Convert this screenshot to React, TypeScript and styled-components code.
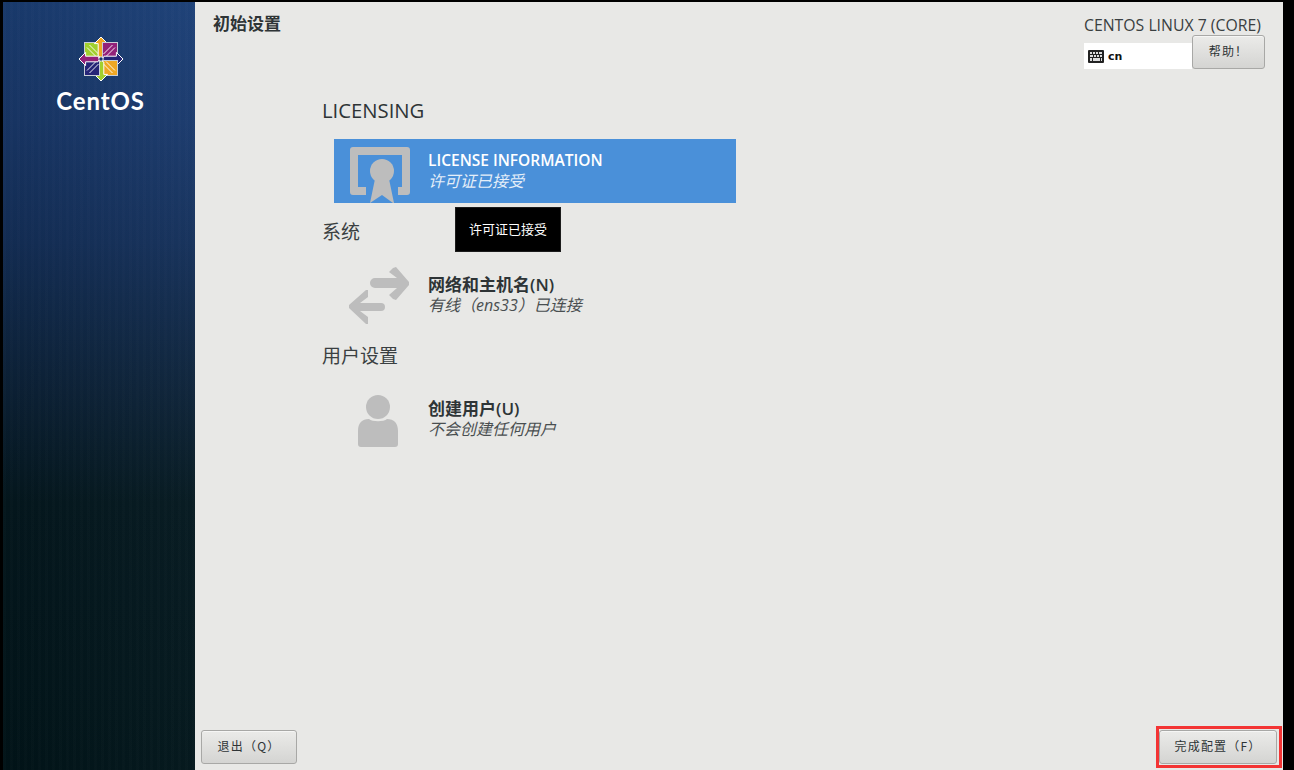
import * as React from "react"
import styled, { createGlobalStyle } from "styled-components"

const latin = `"Open Sans", "Noto Sans CJK SC", sans-serif`
const cjk = `"Noto Sans CJK SC", "Noto Sans", sans-serif`

const GlobalStyle = createGlobalStyle`
  html, body {
    margin: 0;
    padding: 0;
    background: #000;
    overflow: hidden;
  }
  * {
    box-sizing: border-box;
  }
`

const Screen = styled.div`
  display: grid;
  grid-template-columns: 192px 1088px;
  width: 1294px;
  height: 770px;
  padding: 2px 0 0 3px;
  background: #000;
  font-family: ${latin};
  color: #2e3436;
`

const Sidebar = styled.aside`
  display: flex;
  flex-direction: column;
  align-items: center;
  padding: 34px 0 0 3px;
  background:
    repeating-linear-gradient(90deg, rgba(255, 255, 255, 0.012) 0 3px, transparent 3px 7px),
    linear-gradient(90deg, rgba(0, 0, 0, 0.1), rgba(255, 255, 255, 0.02)),
    linear-gradient(180deg, #1b3f76 0, #19396c 120px, #14305a 240px, #0c2238 390px, #04181f 500px, #01151a 768px);
`

const LogoMark = styled.svg`
  display: block;
  width: 46px;
  height: 46px;
`

const LogoName = styled.div`
  margin-top: 6px;
  font-family: "Lato", sans-serif;
  font-size: 24px;
  line-height: 26px;
  font-weight: 700;
  letter-spacing: 0.9px;
  color: #fff;
`

const Main = styled.main`
  display: flex;
  flex-direction: column;
  background: #e8e8e6;
  min-height: 0;
`

const Header = styled.header`
  display: flex;
  justify-content: space-between;
  align-items: flex-start;
  padding: 9px 18px 0;
`

const PageTitle = styled.h1`
  margin: 0;
  font-family: ${cjk};
  font-size: 17px;
  line-height: 24px;
  font-weight: 700;
  color: #2e3436;
`

const ProductBlock = styled.div`
  width: 181px;
  padding-top: 4px;
`

const ProductName = styled.div`
  font-size: 15.8px;
  line-height: 20px;
  white-space: nowrap;
  color: #3a3f41;
`

const LayoutRow = styled.div`
  display: flex;
  align-items: flex-end;
`

const LayoutIndicator = styled.div`
  display: flex;
  align-items: center;
  gap: 4px;
  width: 108px;
  height: 26px;
  padding-left: 4px;
  background: #fff;
  font-family: "DejaVu Sans", sans-serif;
  font-size: 11px;
  font-weight: 700;
  color: #111;
`

const Button = styled.button<{ $width: number }>`
  width: ${({ $width }) => $width}px;
  height: 34px;
  padding: 0 0 3px;
  border: 1px solid #a8a8a6;
  border-radius: 3px;
  background: linear-gradient(180deg, #ebebe9, #d4d4d2);
  box-shadow: inset 0 1px 0 #f6f6f5;
  font-family: ${cjk};
  font-size: 12px;
  letter-spacing: 1.2px;
  color: #2e3436;
`

const Content = styled.div`
  display: flex;
  flex-direction: column;
  gap: 17px;
  margin-top: 27px;
  padding-left: 127px;
`

const Section = styled.section`
  display: flex;
  flex-direction: column;
`

const SectionTitle = styled.h2<{ $latin?: boolean }>`
  margin: 0 0 ${({ $latin }) => ($latin ? 17 : 19)}px;
  padding-top: ${({ $latin }) => ($latin ? 2 : 0)}px;
  font-family: ${latin};
  font-size: ${({ $latin }) => ($latin ? 20.3 : 19)}px;
  line-height: 24px;
  font-weight: 400;
  color: ${({ $latin }) => ($latin ? "#2e3436" : "#3a3f41")};
`

const Spoke = styled.div<{ $selected?: boolean }>`
  position: relative;
  display: flex;
  align-items: center;
  gap: 18px;
  width: 402px;
  height: 64px;
  margin-left: 12px;
  padding-left: 12px;
  background: ${({ $selected }) => ($selected ? "#4a90d9" : "transparent")};
  color: ${({ $selected }) => ($selected ? "#fff" : "#2e3436")};
`

const SpokeIcon = styled.svg`
  flex: none;
  display: block;
  width: 64px;
  height: 64px;
  fill: #bdbdbd;
`

const SpokeText = styled.div`
  display: flex;
  flex-direction: column;
`

const SpokeTitle = styled.div<{ $cjk?: boolean }>`
  font-size: ${({ $cjk }) => ($cjk ? 17 : 15.5)}px;
  line-height: 21px;
  font-weight: 600;
  white-space: nowrap;
`

const SpokeStatus = styled.div`
  font-size: 16px;
  line-height: 21px;
  font-style: italic;
  white-space: nowrap;
  opacity: 0.85;
`

const Tooltip = styled.div`
  position: absolute;
  top: 68px;
  left: 121px;
  display: flex;
  align-items: center;
  justify-content: center;
  width: 106px;
  height: 45px;
  padding-bottom: 2px;
  border: 1px solid #1c1c1c;
  background: #000;
  font-family: ${cjk};
  font-size: 13px;
  color: #fff;
`

const Footer = styled.footer`
  display: flex;
  justify-content: space-between;
  align-items: center;
  margin-top: auto;
  padding: 0 1px 2px 6px;
`

const Highlight = styled.div`
  padding: 1px 2px 1px 0;
  border: 3px solid #f33434;
`

const KeyboardGlyph = () => (
  <svg width="16" height="13" viewBox="0 0 16 13">
    <rect x="0" y="0" width="16" height="13" rx="1" fill="#222" />
    <path
      d="M2 2h2v2H2zM5 2h2v2H5zM8 2h2v2H8zM11 2h3v2h-3zM2 5h3v2H2zM6 5h2v2H6zM9 5h2v2H9zM12 5h2v2h-2zM2 8h2v3H2zM5 8h7v3H5zM13 8h1v3h-1z"
      fill="#ddd"
    />
  </svg>
)

const petals = [
  { rotate: 0, square: "#a2d02e", arrow: "#efa724" },
  { rotate: 90, square: "#932279", arrow: "#262577" },
  { rotate: 180, square: "#efa724", arrow: "#a2d02e" },
  { rotate: 270, square: "#262577", arrow: "#932279" },
]

const CentOSMark = () => (
  <LogoMark viewBox="-23 -23 46 46">
    {petals.map(({ rotate, square, arrow }) => (
      <g key={rotate} transform={`rotate(${rotate})`}>
        <rect x="-16.5" y="-16.5" width="15" height="15" fill={square} stroke="#c9ced6" strokeWidth="1" />
        <path d="M-2.5 -5 L-11.5 -14 M-5 -2.5 L-14 -11.5" stroke="#fff" strokeWidth="0.9" />
        <path
          d="M0 -22 L6.6 -15.4 L2.8 -15.4 L2.8 -3 L0 -1.4 L-2.8 -3 L-2.8 -15.4 L-6.6 -15.4 Z"
          fill={arrow}
          stroke="#fff"
          strokeWidth="1"
        />
      </g>
    ))}
    <rect x="-1.8" y="-1.8" width="3.6" height="3.6" fill="#16376a" stroke="#fff" strokeWidth="0.7" transform="rotate(45)" />
  </LogoMark>
)

const LicenseIcon = () => (
  <SpokeIcon viewBox="0 0 64 64">
    <path d="M7 8h54a3 3 0 0 1 3 3v42a3 3 0 0 1-3 3h-9v-8h4V16H12v32h8v8H7a3 3 0 0 1-3-3V11a3 3 0 0 1 3-3z" />
    <circle cx="36" cy="32" r="12" />
    <path d="M29 40h14l5 24h-1l-11-8-12 8z" />
  </SpokeIcon>
)

const NetworkIcon = () => (
  <SpokeIcon viewBox="0 0 64 64">
    <path d="M47 5l3-1 13 15v3L50 37l-3-1-4-4 8-7H29a5 5 0 0 1 0-10h22l-8-6z" />
    <path d="M20 27l-17 15v3l17 16h2v-7l-8-6h21a4 4 0 0 0 0-8H14l8-6v-7z" />
  </SpokeIcon>
)

const UserIcon = () => (
  <SpokeIcon viewBox="0 0 64 64">
    <circle cx="32" cy="20" r="12" />
    <path d="M12 44c0-8 4-12 11-12 3 3 15 3 18 0 7 0 11 4 11 12v13a3 3 0 0 1-3 3H15a3 3 0 0 1-3-3z" />
  </SpokeIcon>
)

const App = () => (
  <>
    <GlobalStyle />
    <Screen>
      <Sidebar>
        <CentOSMark />
        <LogoName>CentOS</LogoName>
      </Sidebar>
      <Main>
        <Header>
          <PageTitle>初始设置</PageTitle>
          <ProductBlock>
            <ProductName>CENTOS LINUX 7 (CORE)</ProductName>
            <LayoutRow>
              <LayoutIndicator>
                <KeyboardGlyph />
                cn
              </LayoutIndicator>
              <Button $width={73}>帮助！</Button>
            </LayoutRow>
          </ProductBlock>
        </Header>
        <Content>
          <Section>
            <SectionTitle $latin>LICENSING</SectionTitle>
            <Spoke $selected>
              <LicenseIcon />
              <SpokeText>
                <SpokeTitle>LICENSE INFORMATION</SpokeTitle>
                <SpokeStatus>许可证已接受</SpokeStatus>
              </SpokeText>
              <Tooltip>许可证已接受</Tooltip>
            </Spoke>
          </Section>
          <Section>
            <SectionTitle>系统</SectionTitle>
            <Spoke>
              <NetworkIcon />
              <SpokeText>
                <SpokeTitle $cjk>网络和主机名(N)</SpokeTitle>
                <SpokeStatus>有线（ens33）已连接</SpokeStatus>
              </SpokeText>
            </Spoke>
          </Section>
          <Section>
            <SectionTitle>用户设置</SectionTitle>
            <Spoke>
              <UserIcon />
              <SpokeText>
                <SpokeTitle $cjk>创建用户(U)</SpokeTitle>
                <SpokeStatus>不会创建任何用户</SpokeStatus>
              </SpokeText>
            </Spoke>
          </Section>
        </Content>
        <Footer>
          <Button $width={96}>退出（Q）</Button>
          <Highlight>
            <Button $width={118}>完成配置（F）</Button>
          </Highlight>
        </Footer>
      </Main>
    </Screen>
  </>
)

export default App
